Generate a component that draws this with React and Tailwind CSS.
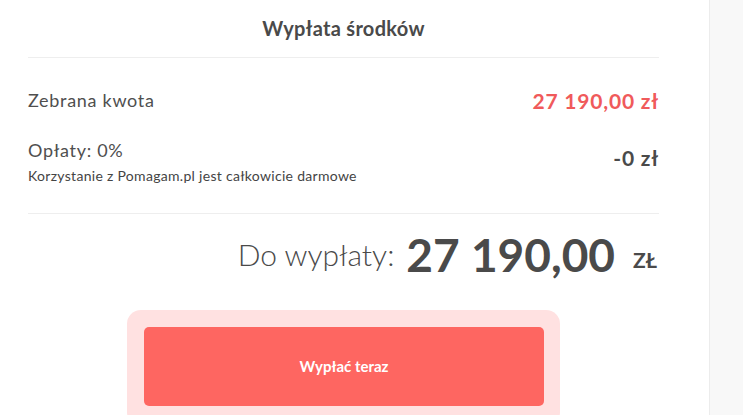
export default function App() {
  return (
    <div className="flex h-[415px] w-[743px] overflow-hidden bg-white font-['Lato',sans-serif] text-[#4a4a4a]">
      <div className="w-[709px] shrink-0">
        <div className="ml-[28px] w-[631px]">
          <div className="flex h-[58px] items-center justify-center border-b border-[#eeeeee] pb-[2px]">
            <h1 className="text-[20px] font-bold tracking-[0.3px] text-[#4a4a4a]">Wypłata środków</h1>
          </div>
          <div className="flex h-[82px] items-center justify-between pt-[3px]">
            <span className="text-[18px] tracking-[0.7px] text-[#4f4f4f]">Zebrana kwota</span>
            <span className="text-[21px] font-bold tracking-[0.8px] text-[#f05a5b]">27 190,00 zł</span>
          </div>
          <div className="flex items-start justify-between border-b border-[#eeeeee] pb-[29px]">
            <div className="flex flex-col">
              <span className="text-[18px] leading-[20px] tracking-[0.7px] text-[#4f4f4f]">Opłaty: 0%</span>
              <span className="mt-[8px] text-[14px] leading-[16px] tracking-[0.3px] text-[#444]">Korzystanie z Pomagam.pl jest całkowicie darmowe</span>
            </div>
            <span className="mt-[2px] text-[21px] font-bold tracking-[0.8px] text-[#4a4a4a]">-0 zł</span>
          </div>
          <div className="flex h-[81px] items-center justify-end pr-[2px]">
            <span className="text-[30px] font-light text-[#4a4a4a]">Do wypłaty:</span>
            <span className="ml-[12px] text-[46px] font-bold leading-none text-[#4a4a4a]">27 190,00</span>
            <span className="ml-[18px] mt-[10px] text-[21px] font-bold uppercase text-[#4a4a4a]">zł</span>
          </div>
        </div>
        <div className="ml-[127px] mt-[15px] w-[433px] rounded-[14px] bg-[#ffe1e1] px-[17px] pb-[20px] pt-[17px]">
          <button className="flex h-[79px] w-[400px] items-center justify-center rounded-[5px] bg-[#fe6661] text-[15px] font-bold text-white">
            Wypłać teraz
          </button>
        </div>
      </div>
      <div className="flex-1 border-l border-[#ececec] bg-[#f8f8f8]" />
    </div>
  );
}
